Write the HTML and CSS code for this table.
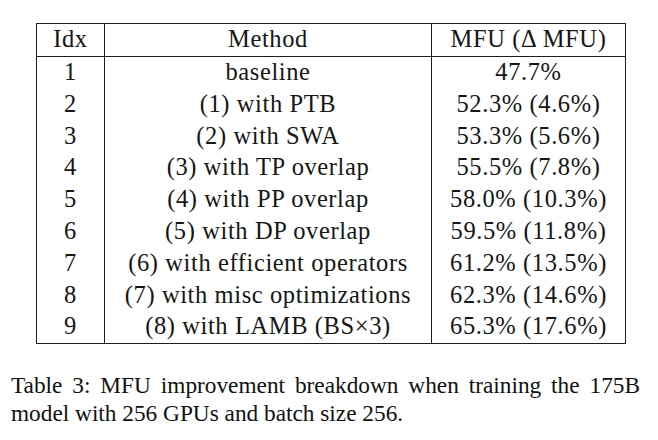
FILE: index.html
```html
<!DOCTYPE html>
<html>
<head>
<meta charset="utf-8">
<link rel="stylesheet" href="styles.css">
</head>
<body>
<div class="page">
  <table class="results">
    <colgroup>
      <col class="c-idx">
      <col class="c-method">
      <col class="c-mfu">
    </colgroup>
    <thead>
      <tr><th>Idx</th><th>Method</th><th>MFU (Δ MFU)</th></tr>
    </thead>
    <tbody>
      <tr><td>1</td><td>baseline</td><td>47.7%</td></tr>
      <tr><td>2</td><td>(1) with PTB</td><td>52.3% (4.6%)</td></tr>
      <tr><td>3</td><td>(2) with SWA</td><td>53.3% (5.6%)</td></tr>
      <tr><td>4</td><td>(3) with TP overlap</td><td>55.5% (7.8%)</td></tr>
      <tr><td>5</td><td>(4) with PP overlap</td><td>58.0% (10.3%)</td></tr>
      <tr><td>6</td><td>(5) with DP overlap</td><td>59.5% (11.8%)</td></tr>
      <tr><td>7</td><td>(6) with efficient operators</td><td>61.2% (13.5%)</td></tr>
      <tr><td>8</td><td>(7) with misc optimizations</td><td>62.3% (14.6%)</td></tr>
      <tr><td>9</td><td>(8) with LAMB (BS×3)</td><td>65.3% (17.6%)</td></tr>
    </tbody>
  </table>
  <p class="caption">Table 3: MFU improvement breakdown when training the 175B model with 256 GPUs and batch size 256.</p>
</div>
</body>
</html>
```

FILE: styles.css
```css
html, body {
  margin: 0;
  padding: 0;
  background: #ffffff;
}
body {
  font-family: "Liberation Serif", serif;
  color: #161616;
}
.page {
  display: flex;
  flex-direction: column;
  align-items: flex-start;
  padding-top: 23px;
}
.results {
  margin-left: 36px;
  width: 589px;
  table-layout: fixed;
  border-collapse: collapse;
  border: 1px solid #1e1e1e;
  font-family: "Liberation Serif";
  font-size: 24.5px;
  letter-spacing: 0.6px;
}
.results th,
.results td {
  font-family: "Liberation Serif";
  font-weight: normal;
  text-align: center;
  padding: 0 0 2px 0;
  line-height: 29.8px;
  vertical-align: top;
  white-space: nowrap;
  border-left: 1px solid #1e1e1e;
  border-right: 1px solid #1e1e1e;
}
.results thead th {
  border-bottom: 1px solid #1e1e1e;
  line-height: 30px;
  padding-bottom: 2px;
}
.c-idx { width: 68px; }
.c-method { width: 327px; }
.c-mfu { width: 194px; }
.caption {
  margin: 27px 0 0 11px;
  width: 629px;
  font-family: "Liberation Serif";
  font-size: 23.3px;
  line-height: 28px;
  text-align: justify;
  color: #111111;
}
```
